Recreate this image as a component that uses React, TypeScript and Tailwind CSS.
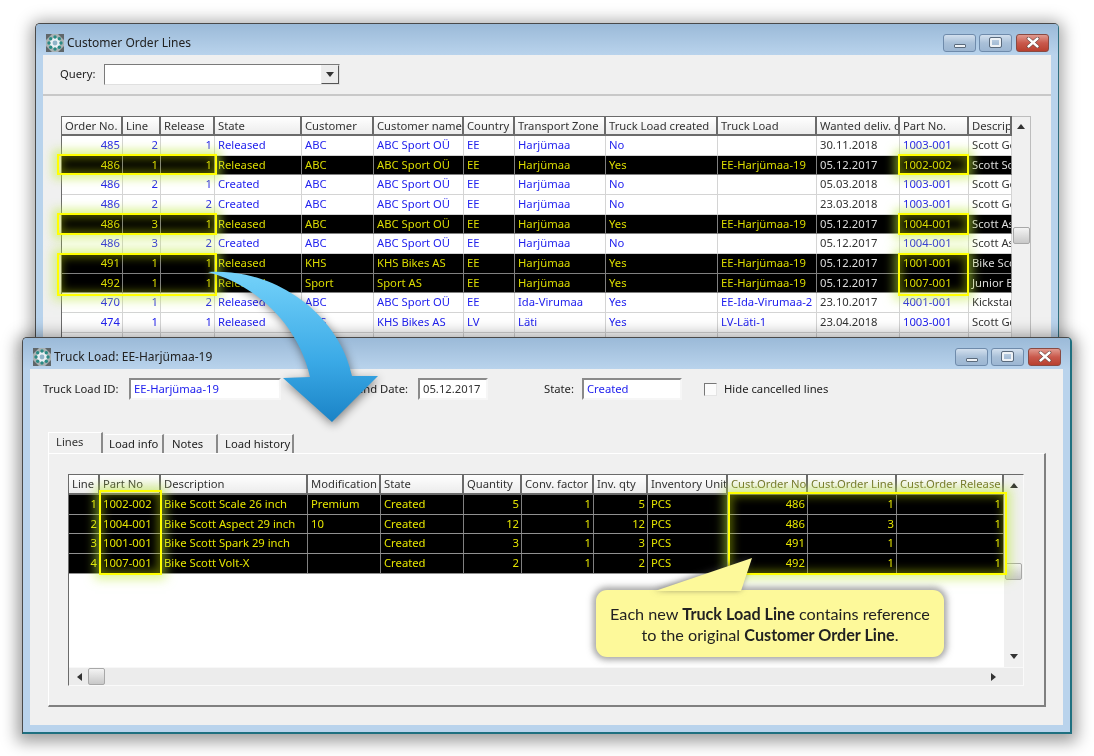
import React from "react";

type Row = { c: string[]; on?: boolean };

const backCols = "grid-cols-[61px_38px_54px_87px_72px_90px_51px_91px_112px_99px_83px_69px_43px]";
const frontCols = "grid-cols-[31px_61px_147px_73px_83px_58px_72px_54px_80px_80px_89px_107px]";

const backHeader = ["Order No.", "Line", "Release", "State", "Customer", "Customer name", "Country", "Transport Zone", "Truck Load created", "Truck Load", "Wanted deliv. date", "Part No.", "Description"];
const backRight = [0, 1, 2];
const backGrey = [10, 12];

const backRows: Row[] = [
  { c: ["485", "2", "1", "Released", "ABC", "ABC Sport OÜ", "EE", "Harjümaa", "No", "", "30.11.2018", "1003-001", "Scott Genius"] },
  { c: ["486", "1", "1", "Released", "ABC", "ABC Sport OÜ", "EE", "Harjümaa", "Yes", "EE-Harjümaa-19", "05.12.2017", "1002-002", "Scott Scale"], on: true },
  { c: ["486", "2", "1", "Created", "ABC", "ABC Sport OÜ", "EE", "Harjümaa", "No", "", "05.03.2018", "1003-001", "Scott Genius"] },
  { c: ["486", "2", "2", "Created", "ABC", "ABC Sport OÜ", "EE", "Harjümaa", "No", "", "23.03.2018", "1003-001", "Scott Genius"] },
  { c: ["486", "3", "1", "Released", "ABC", "ABC Sport OÜ", "EE", "Harjümaa", "Yes", "EE-Harjümaa-19", "05.12.2017", "1004-001", "Scott Aspect"], on: true },
  { c: ["486", "3", "2", "Created", "ABC", "ABC Sport OÜ", "EE", "Harjümaa", "No", "", "05.12.2017", "1004-001", "Scott Aspect"] },
  { c: ["491", "1", "1", "Released", "KHS", "KHS Bikes AS", "EE", "Harjümaa", "Yes", "EE-Harjümaa-19", "05.12.2017", "1001-001", "Bike Scott"], on: true },
  { c: ["492", "1", "1", "Released", "Sport", "Sport AS", "EE", "Harjümaa", "Yes", "EE-Harjümaa-19", "05.12.2017", "1007-001", "Junior Bike"], on: true },
  { c: ["470", "1", "2", "Released", "ABC", "ABC Sport OÜ", "EE", "Ida-Virumaa", "Yes", "EE-Ida-Virumaa-2", "23.10.2017", "4001-001", "Kickstart"] },
  { c: ["474", "1", "1", "Released", "KHS", "KHS Bikes AS", "LV", "Läti", "Yes", "LV-Läti-1", "23.04.2018", "1003-001", "Scott Genius"] },
  { c: ["", "", "", "", "", "", "", "", "", "", "", "", ""] },
];

const frontHeader = ["Line", "Part No", "Description", "Modification", "State", "Quantity", "Conv. factor", "Inv. qty", "Inventory Unit", "Cust.Order No", "Cust.Order Line", "Cust.Order Release"];
const frontRight = [0, 5, 6, 7, 9, 10, 11];
const frontRows: Row[] = [
  { c: ["1", "1002-002", "Bike Scott Scale 26 inch", "Premium", "Created", "5", "1", "5", "PCS", "486", "1", "1"], on: true },
  { c: ["2", "1004-001", "Bike Scott Aspect 29 inch", "10", "Created", "12", "1", "12", "PCS", "486", "3", "1"], on: true },
  { c: ["3", "1001-001", "Bike Scott Spark 29 inch", "", "Created", "3", "1", "3", "PCS", "491", "1", "1"], on: true },
  { c: ["4", "1007-001", "Bike Scott Volt-X", "", "Created", "2", "1", "2", "PCS", "492", "1", "1"], on: true },
];

function WinIcon() {
  return (
    <svg width="18" height="18" viewBox="0 0 18 18" className="shrink-0">
      <rect x="0" y="0" width="18" height="18" fill="#aab2b4" />
      <path d="M0 0h6l-6 6zM18 0h-6l6 6zM0 18h6l-6-6zM18 18h-6l6-6z" fill="#5f6669" />
      <circle cx="9" cy="9" r="5.4" fill="#e9f0f4" />
      <circle cx="9" cy="9" r="2.4" fill="#8fb4c8" />
      <g fill="#2a8a84">
        <circle cx="9" cy="3" r="1.7" />
        <circle cx="13.3" cy="4.7" r="1.7" />
        <circle cx="15" cy="9" r="1.7" />
        <circle cx="13.3" cy="13.3" r="1.7" />
        <circle cx="9" cy="15" r="1.7" />
        <circle cx="4.7" cy="13.3" r="1.7" />
        <circle cx="3" cy="9" r="1.7" />
        <circle cx="4.7" cy="4.7" r="1.7" />
      </g>
    </svg>
  );
}

function Controls() {
  return (
    <div className="flex">
      <div className="w-[33px] h-[18px] rounded-[3px] border border-[#6f8bab] bg-gradient-to-b from-[#d3e0ee] via-[#a9c0d8] to-[#9cb6d2] flex items-end justify-center pb-[3px]">
        <div className="w-[12px] h-[4px] bg-[#eef2f6] border border-[#5a6a7c] rounded-[1px]" />
      </div>
      <div className="ml-[3px] w-[33px] h-[18px] rounded-[3px] border border-[#6f8bab] bg-gradient-to-b from-[#d3e0ee] via-[#a9c0d8] to-[#9cb6d2] flex items-center justify-center">
        <div className="w-[11px] h-[9px] border-2 border-[#eef2f6] outline outline-1 outline-[#5a6a7c] rounded-[1px]" />
      </div>
      <div className="ml-[4px] w-[33px] h-[18px] rounded-[3px] border border-[#8a4a42] bg-gradient-to-b from-[#e09a90] via-[#c9594c] to-[#b8402f] flex items-center justify-center">
        <svg width="14" height="11" viewBox="0 0 14 11">
          <path d="M2.5 1.5 L11.5 9.5 M11.5 1.5 L2.5 9.5" stroke="#5a3a36" strokeWidth="3.6" strokeLinecap="round" />
          <path d="M2.5 1.5 L11.5 9.5 M11.5 1.5 L2.5 9.5" stroke="#ffffff" strokeWidth="2.4" strokeLinecap="round" />
        </svg>
      </div>
    </div>
  );
}

function TitleBar({ title }: { title: string }) {
  return (
    <div className="h-[31px] shrink-0 flex items-center justify-between pl-[10px] pr-[9px] pt-[7px] bg-gradient-to-b from-[#9bbad8] to-[#b9d3ec]">
      <div className="flex items-center gap-[3px] text-[12px] text-[#222]">
        <WinIcon />
        <span>{title}</span>
      </div>
      <div className="-mt-[1px]">
        <Controls />
      </div>
    </div>
  );
}

function Cell({ text, right, color, head, on }: { text: string; right?: boolean; color?: string; head?: boolean; on?: boolean }) {
  return (
    <div
      className={`overflow-hidden whitespace-nowrap leading-[18px] pl-[3px] pr-[2px] ${right ? "text-right" : "text-left"} ${
        head
          ? "border-r-2 border-[#6b6b6b] bg-gradient-to-b from-white to-[#ececec]"
          : on
          ? "border-r border-[#808080]"
          : "border-r border-[#d4d4d4]"
      } ${color ?? ""}`}
    >
      {text}
    </div>
  );
}

function ArrowGlyph({ dir }: { dir: "up" | "down" | "left" | "right" }) {
  const d = { up: "M0 5 L4 0 L8 5Z", down: "M0 0 L8 0 L4 5Z", left: "M5 0 L5 8 L0 4Z", right: "M0 0 L0 8 L5 4Z" }[dir];
  const vertical = dir === "up" || dir === "down";
  return (
    <svg width={vertical ? 8 : 5} height={vertical ? 5 : 8} viewBox={vertical ? "0 0 8 5" : "0 0 5 8"} className="shrink-0">
      <path d={d} fill="#333" />
    </svg>
  );
}

function Thumb() {
  return <div className="w-[17px] h-[17px] rounded-[2px] border border-[#a8a8a8] bg-gradient-to-b from-[#f4f4f4] to-[#c8c8c8]" />;
}

function Glow({ className }: { className: string }) {
  return (
    <div
      className={`absolute border-[2.5px] border-[#ffff00] shadow-[0_0_10px_4px_rgba(190,235,60,0.55),inset_0_0_8px_3px_rgba(190,215,0,0.42)] ${className}`}
    />
  );
}

function BackWindow() {
  return (
    <div className="absolute left-[35px] top-[23px] w-[1024px] h-[330px] flex flex-col border border-[#4a4a4a] border-r-[#2f6f7f] rounded-t-[5px] bg-[#b9d3ec] shadow-[0_2px_16px_4px_rgba(0,0,0,0.35)] overflow-hidden">
      <TitleBar title="Customer Order Lines" />
      <div className="mx-[7px] flex-1 bg-[#f0f0f0]">
        <div className="h-[41px] pl-[17px] flex items-center border-b-2 border-[#c8c8c8] gap-[9px]">
          <span className="w-[35px] text-[#222]">Query:</span>
          <div className="w-[236px] h-[21px] bg-white border border-[#7a7a7a] border-r-[#e0e0e0] border-b-[#e0e0e0] flex justify-end">
            <div className="w-[18px] h-full bg-[#ececec] border border-[#555] border-t-[#eee] border-l-[#eee] flex items-center justify-center">
              <ArrowGlyph dir="down" />
            </div>
          </div>
        </div>
        <div className="ml-[18px] mt-[20px] flex w-[970px]">
          <div className="w-[951px] border-t border-l border-[#6b6b6b] text-[#333]">
            <div className={`grid ${backCols} h-[19px] border-b-2 border-[#6b6b6b] text-[#333]`}>
              {backHeader.map((h) => (
                <Cell key={h} text={h} head />
              ))}
            </div>
            {backRows.map((r, i) => (
              <div
                key={i}
                className={`grid ${backCols} h-[19.67px] border-b ${r.on ? "bg-black border-[#808080]" : "bg-white border-[#d4d4d4]"}`}
              >
                {r.c.map((t, j) => {
                  const grey = backGrey.includes(j);
                  const color = r.on
                    ? grey
                      ? "text-[#dcdcdc]"
                      : "text-[#dcdc00]"
                    : grey
                    ? "text-[#333]"
                    : "text-[#2222ee]";
                  return <Cell key={j} text={t} right={backRight.includes(j)} color={color} on={r.on} />;
                })}
              </div>
            ))}
          </div>
          <div className="w-[19px] flex flex-col items-center border-t border-r border-[#bdbdbd]">
            <div className="mt-[7px]">
              <ArrowGlyph dir="up" />
            </div>
            <div className="mt-[98px]">
              <Thumb />
            </div>
          </div>
        </div>
      </div>
    </div>
  );
}

function Sunken({ className, text, color }: { className: string; text?: string; color?: string }) {
  return (
    <div className={`h-[22px] pl-[3px] leading-[18px] bg-white border-2 border-[#8a8a8a] border-r-[#f6f6f6] border-b-[#f6f6f6] ${className} ${color ?? ""}`}>
      {text}
    </div>
  );
}

function Tab({ label, active, className }: { label: string; active?: boolean; className: string }) {
  return (
    <div
      className={`whitespace-nowrap border-r-2 border-[#8a8a8a] ${
        active ? "h-[21px] leading-[17px] bg-[#f0f0f0] border-t border-l border-t-white border-l-white text-[#333]" : "h-[19px] leading-[18px] border-t border-t-white text-[#222]"
      } ${className}`}
    >
      {label}
    </div>
  );
}

function FrontWindow() {
  return (
    <div className="absolute left-[22px] top-[337px] w-[1050px] h-[397px] flex flex-col border border-[#4a4a4a] border-r-[#1f7080] border-b-[#1f7080] border-b-2 border-r-2 rounded-t-[5px] bg-[#b9d3ec] shadow-[0_3px_16px_5px_rgba(0,0,0,0.38)] overflow-hidden">
      <TitleBar title="Truck Load: EE-Harjümaa-19" />
      <div className="mx-[7px] mb-[7px] flex-1 bg-[#f0f0f0] text-[#222]">
        <div className="flex items-center mt-[9px] pl-[13px]">
          <span className="w-[86px]">Truck Load ID:</span>
          <Sunken className="w-[152px]" text="EE-Harjümaa-19" color="text-[#2222ee]" />
          <span className="w-[127px] text-right">Send Date:</span>
          <Sunken className="w-[70px] ml-[10px]" text="05.12.2017" color="text-[#333]" />
          <span className="w-[38px] ml-[56px]">State:</span>
          <Sunken className="w-[100px]" text="Created" color="text-[#2222ee]" />
          <div className="ml-[22px] w-[13px] h-[13px] bg-[#fbfbfb] border border-[#777] border-r-[#e4e4e4] border-b-[#e4e4e4]" />
          <span className="ml-[7px]">Hide cancelled lines</span>
        </div>
        <div className="ml-[18px] mt-[32px] flex items-start h-[21px] relative z-10">
          <Tab label="Lines" active className="w-[55px] pl-[7px]" />
          <div className="w-[2px]" />
          <Tab label="Load info" className="w-[59px] pl-[4px] mt-[2px]" />
          <Tab label="Notes" className="w-[53px] ml-[1px] pl-[7px] mt-[2px]" />
          <Tab label="Load history" className="w-[74px] ml-[2px] pl-[5px] mt-[2px]" />
        </div>
        <div className="ml-[18px] w-[998px] h-[254px] border-t border-l border-white border-r-2 border-r-[#808080] border-b-2 border-b-[#808080] pl-[19px] pt-[20px]">
          <div className="w-[956px] h-[212px] flex flex-col border-t border-l border-[#6b6b6b] border-r border-r-[#fafafa] border-b border-b-[#fafafa]">
            <div className="flex flex-1 min-h-0">
              <div className="w-[936px] bg-white text-[#333]">
                <div className={`grid ${frontCols} h-[20px] border-b-2 border-[#6b6b6b]`}>
                  {frontHeader.map((h, i) => (
                    <Cell key={h} text={h} head color={i >= 9 ? "text-[#6e6e2a]" : "text-[#333]"} />
                  ))}
                </div>
                {frontRows.map((r, i) => (
                  <div key={i} className={`grid ${frontCols} h-[19.67px] bg-black border-b border-[#909090]`}>
                    {r.c.map((t, j) => (
                      <Cell key={j} text={t} right={frontRight.includes(j)} color="text-[#e4e400]" on />
                    ))}
                  </div>
                ))}
              </div>
              <div className="w-[19px] flex flex-col items-center py-[8px]">
                <ArrowGlyph dir="up" />
                <div className="mt-[75px]">
                  <Thumb />
                </div>
                <div className="flex-1" />
                <ArrowGlyph dir="down" />
              </div>
            </div>
            <div className="h-[18px] shrink-0 bg-[#ececec] border-t border-[#f8f8f8] flex items-center pl-[8px] pr-[27px]">
              <ArrowGlyph dir="left" />
              <div className="ml-[6px]">
                <Thumb />
              </div>
              <div className="flex-1" />
              <ArrowGlyph dir="right" />
            </div>
          </div>
        </div>
      </div>
    </div>
  );
}

function Callout() {
  return (
    <div className="absolute left-[596px] top-[590px] w-[348px] h-[67px] rounded-[11px] bg-[#fdf99a] shadow-[0_0_6px_3px_rgba(90,90,90,0.55)] flex flex-col items-center justify-center text-[16.2px] leading-[21px] text-[#222] font-['Lato',sans-serif]">
      <span>
        Each new <b>Truck Load Line</b> contains reference
      </span>
      <span>
        to the original <b>Customer Order Line</b>.
      </span>
    </div>
  );
}

function CalloutTail() {
  return (
    <svg width="110" height="40" viewBox="0 0 110 40" className="absolute left-[650px] top-[555px] overflow-visible drop-shadow-[-1px_-1px_3px_rgba(60,60,60,0.6)]">
      <path d="M5 36 L102 3 L91 36 Z" fill="#fdf99a" />
    </svg>
  );
}

function CurvedArrow() {
  return (
    <svg width="200" height="170" viewBox="200 262 200 170" className="absolute left-[200px] top-[262px] drop-shadow-[1px_3px_5px_rgba(0,0,0,0.45)]">
      <defs>
        <linearGradient id="arrowFill" x1="0" y1="0" x2="0" y2="1">
          <stop offset="0" stopColor="#74d2fa" />
          <stop offset="0.6" stopColor="#3aa9e6" />
          <stop offset="1" stopColor="#1a83c6" />
        </linearGradient>
      </defs>
      <path d="M208 272 C 280 268, 340 318, 352 376 L378 376 L332 422 L283 378 L310 377 C 300 330, 262 287, 208 272 Z" fill="url(#arrowFill)" />
    </svg>
  );
}

export default function App() {
  return (
    <div className="relative w-[1094px] h-[756px] overflow-hidden bg-white text-[11.25px] blur-[0.35px] font-['Noto_Sans',sans-serif]">
      <BackWindow />
      <Glow className="left-[57px] top-[154px] w-[160px] h-[21px]" />
      <Glow className="left-[57px] top-[213px] w-[160px] h-[22px]" />
      <Glow className="left-[57px] top-[253px] w-[160px] h-[43px]" />
      <Glow className="left-[898px] top-[154px] w-[71px] h-[21px]" />
      <Glow className="left-[898px] top-[213px] w-[71px] h-[22px]" />
      <Glow className="left-[898px] top-[253px] w-[71px] h-[43px]" />
      <FrontWindow />
      <CurvedArrow />
      <Glow className="left-[99px] top-[490px] w-[63px] h-[85px]" />
      <Glow className="left-[728px] top-[492px] w-[279px] h-[83px]" />
      <Callout />
      <CalloutTail />
    </div>
  );
}
